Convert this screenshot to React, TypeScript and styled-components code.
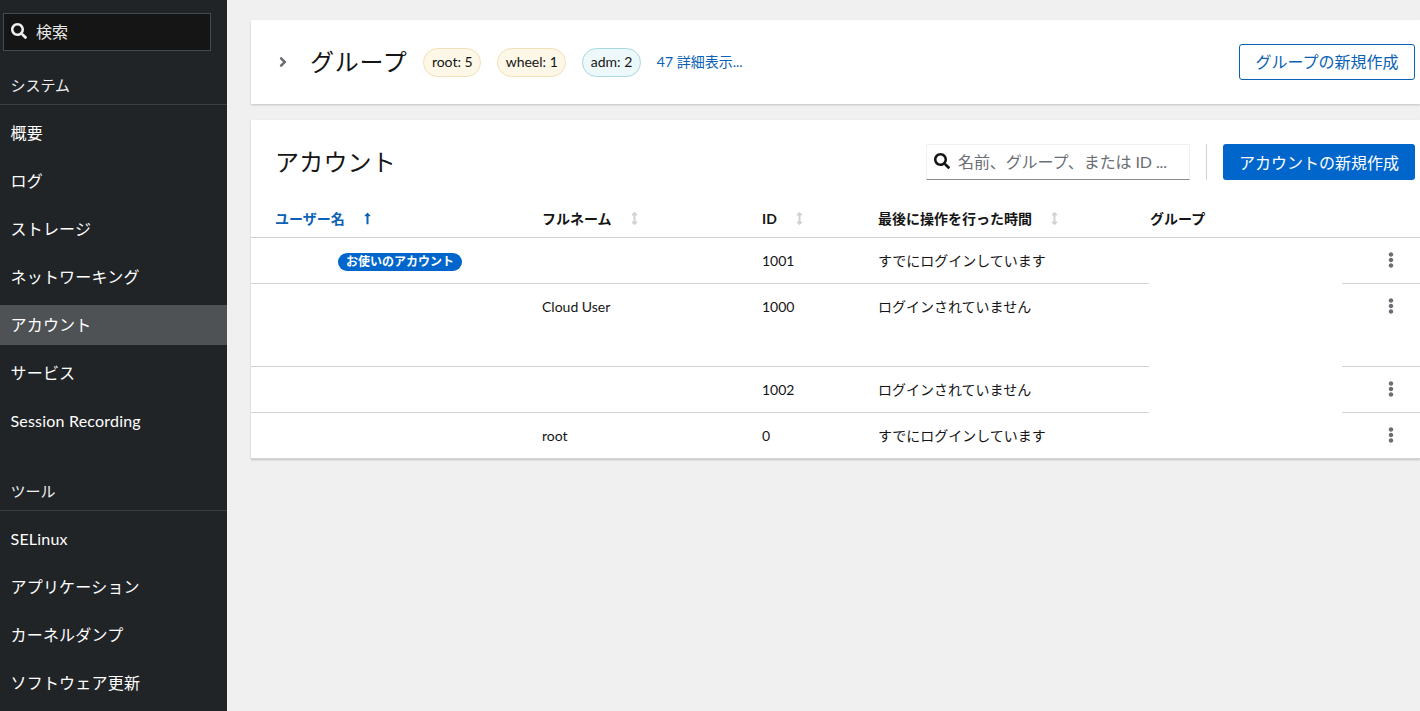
import styled, { createGlobalStyle } from "styled-components";
import { FaAngleRight, FaArrowsAltV, FaEllipsisV, FaLongArrowAltUp, FaSearch } from "react-icons/fa";

const FONT = `Lato, "Noto Sans CJK JP", sans-serif`;

const GlobalStyle = createGlobalStyle`
    html, body {
        margin: 0;
        height: 100%;
        overflow: hidden;
        background: #f0f0f0;
        font-family: ${FONT};
    }
    * {
        box-sizing: border-box;
    }
`;

const Page = styled.div`
    display: flex;
    width: 1420px;
    height: 711px;
    overflow: hidden;
`;

const Sidebar = styled.nav`
    flex: 0 0 227px;
    display: flex;
    flex-direction: column;
    background: #212427;
    color: #fff;
    padding-top: 13px;
`;

const SearchBox = styled.div`
    display: flex;
    align-items: center;
    gap: 9px;
    width: 208px;
    height: 38px;
    margin-left: 3px;
    padding: 0 0 2px 7px;
    background: #151515;
    border: 1px solid #454a4f;
    color: #e8e8e8;
    font-size: 16px;
    & svg {
        font-size: 16px;
        color: #f0f0f0;
    }
`;

const SectionTitle = styled.div<{ $top: number }>`
    height: 33px;
    margin-top: ${(p) => p.$top}px;
    padding: 0 10.5px;
    line-height: 27px;
    font-size: 15px;
    color: #f0f0f0;
    border-bottom: 1px solid #3c3f42;
`;

const NavList = styled.div`
    display: flex;
    flex-direction: column;
    gap: 8px;
    padding-top: 8px;
`;

const NavItem = styled.div<{ $active?: boolean }>`
    height: 40px;
    padding: 0 10.5px;
    line-height: 40px;
    font-size: 16px;
    letter-spacing: 0.2px;
    color: #fff;
    white-space: nowrap;
    background: ${(p) => (p.$active ? "#4f5255" : "transparent")};
`;

const Main = styled.main`
    flex: 1;
    min-width: 0;
    display: flex;
    flex-direction: column;
    gap: 16px;
    padding: 20px 0 0 24px;
`;

const Card = styled.section`
    background: #fff;
    box-shadow: 0 1px 2px rgba(3, 3, 3, 0.2);
`;

const GroupCard = styled(Card)`
    display: flex;
    align-items: center;
    height: 84px;
    padding: 0 5px 0 24px;
    color: #151515;
`;

const Chevron = styled.span`
    display: flex;
    width: 35px;
    color: #6a6e73;
    font-size: 16px;
`;

const GroupTitle = styled.h2`
    margin: 0 16px 4px 0;
    font-size: 24px;
    font-weight: 400;
    letter-spacing: 0.7px;
    color: #151515;
`;

const Chip = styled.span<{ $info?: boolean }>`
    height: 29px;
    margin: 0 16px 0 0;
    padding: 0 7.5px;
    line-height: 26px;
    font-size: 14px;
    color: #151515;
    border-radius: 15px;
    border: 1px solid ${(p) => (p.$info ? "#a9d8e0" : "#f3dfb5")};
    background: ${(p) => (p.$info ? "#edf8fa" : "#fdf7e7")};
`;

const MoreLink = styled.a`
    margin-bottom: 2px;
    font-size: 14px;
    color: #0b62b4;
`;

const OutlineButton = styled.button`
    margin-left: auto;
    height: 36px;
    padding: 0 15.5px 2px;
    font-family: inherit;
    font-size: 16px;
    color: #0b62b4;
    background: #fff;
    border: 1px solid #0b62b4;
    border-radius: 3px;
`;

const AccountCard = styled(Card)`
    padding-top: 24px;
`;

const Toolbar = styled.div`
    display: flex;
    align-items: center;
    height: 36px;
    padding: 0 5px 0 24px;
`;

const AccountTitle = styled.h2`
    margin: 0 auto 4px 0;
    font-size: 24px;
    font-weight: 400;
    letter-spacing: 0.2px;
    color: #151515;
`;

const FilterBox = styled.div`
    display: flex;
    align-items: center;
    gap: 8px;
    width: 264px;
    height: 36px;
    padding: 0 0 2px 7px;
    border: 1px solid #f0f0f0;
    border-bottom-color: #8a8d90;
    color: #6a6e73;
    font-size: 16px;
    letter-spacing: -0.1px;
    white-space: nowrap;
    & svg {
        font-size: 16px;
        color: #151515;
    }
`;

const Divider = styled.div`
    width: 1px;
    height: 36px;
    margin: 0 16px;
    background: #d2d2d2;
`;

const PrimaryButton = styled.button`
    height: 36px;
    padding: 0 16px;
    font-family: inherit;
    font-size: 16px;
    color: #fff;
    background: #06c;
    border: 0;
    border-radius: 3px;
`;

const Table = styled.table`
    width: 1169px;
    margin-top: 11px;
    table-layout: fixed;
    border-collapse: separate;
    border-spacing: 0;
    font-size: 14px;
    color: #151515;
`;

const HeadCell = styled.th<{ $active?: boolean; $flush?: boolean }>`
    height: 47px;
    padding: 8px 0 0 ${(p) => (p.$flush ? 1 : 24)}px;
    text-align: left;
    font-size: 14px;
    font-weight: 700;
    white-space: nowrap;
    color: ${(p) => (p.$active ? "#0b62b4" : "#151515")};
    border-bottom: 1px solid #d2d2d2;
    & svg {
        margin-left: 16px;
        vertical-align: -1px;
        font-size: 13px;
        color: ${(p) => (p.$active ? "#0b62b4" : "#d2d2d2")};
    }
`;

const Cell = styled.td<{ $plain?: boolean }>`
    padding: 15px 0 0 24px;
    vertical-align: top;
    line-height: 16px;
    border-bottom: ${(p) => (p.$plain ? "0" : "1px solid #d2d2d2")};
`;

const ActionCell = styled(Cell)`
    padding: 14px 0 0 41px;
    color: #6a6e73;
    font-size: 16px;
`;

const AccountBadge = styled.span`
    display: inline-block;
    height: 18px;
    margin-left: 63px;
    padding: 0 8px;
    line-height: 18px;
    font-size: 12px;
    font-weight: 700;
    color: #fff;
    background: #06c;
    border-radius: 9px;
    white-space: nowrap;
`;

const ROWS = [
    { badge: true, fullName: "", id: "1001", last: "すでにログインしています", height: 46 },
    { fullName: "Cloud User", id: "1000", last: "ログインされていません", height: 83 },
    { fullName: "", id: "1002", last: "ログインされていません", height: 46 },
    { fullName: "root", id: "0", last: "すでにログインしています", height: 46 },
];

const NAV_SYSTEM = ["概要", "ログ", "ストレージ", "ネットワーキング", "アカウント", "サービス", "Session Recording"];
const NAV_TOOLS = ["SELinux", "アプリケーション", "カーネルダンプ", "ソフトウェア更新"];

export default function App() {
    return (
        <Page>
            <GlobalStyle />
            <Sidebar>
                <SearchBox>
                    <FaSearch />
                    検索
                </SearchBox>
                <SectionTitle $top={21}>システム</SectionTitle>
                <NavList>
                    {NAV_SYSTEM.map((item) => (
                        <NavItem key={item} $active={item === "アカウント"}>
                            {item}
                        </NavItem>
                    ))}
                </NavList>
                <SectionTitle $top={37}>ツール</SectionTitle>
                <NavList>
                    {NAV_TOOLS.map((item) => (
                        <NavItem key={item}>{item}</NavItem>
                    ))}
                </NavList>
            </Sidebar>
            <Main>
                <GroupCard>
                    <Chevron>
                        <FaAngleRight />
                    </Chevron>
                    <GroupTitle>グループ</GroupTitle>
                    <Chip>root: 5</Chip>
                    <Chip>wheel: 1</Chip>
                    <Chip $info>adm: 2</Chip>
                    <MoreLink>47 詳細表示...</MoreLink>
                    <OutlineButton>グループの新規作成</OutlineButton>
                </GroupCard>
                <AccountCard>
                    <Toolbar>
                        <AccountTitle>アカウント</AccountTitle>
                        <FilterBox>
                            <FaSearch />
                            名前、グループ、または ID ...
                        </FilterBox>
                        <Divider />
                        <PrimaryButton>アカウントの新規作成</PrimaryButton>
                    </Toolbar>
                    <Table>
                        <colgroup>
                            <col width={267} />
                            <col width={220} />
                            <col width={116} />
                            <col width={295} />
                            <col width={193} />
                            <col width={78} />
                        </colgroup>
                        <thead>
                            <tr>
                                <HeadCell $active>
                                    ユーザー名
                                    <FaLongArrowAltUp />
                                </HeadCell>
                                <HeadCell>
                                    フルネーム
                                    <FaArrowsAltV />
                                </HeadCell>
                                <HeadCell>
                                    ID
                                    <FaArrowsAltV />
                                </HeadCell>
                                <HeadCell>
                                    最後に操作を行った時間
                                    <FaArrowsAltV />
                                </HeadCell>
                                <HeadCell $flush>グループ</HeadCell>
                                <HeadCell />
                            </tr>
                        </thead>
                        <tbody>
                            {ROWS.map((row, i) => (
                                <tr key={row.id} style={{ height: row.height }}>
                                    <Cell>{row.badge && <AccountBadge>お使いのアカウント</AccountBadge>}</Cell>
                                    <Cell>{row.fullName}</Cell>
                                    <Cell>{row.id}</Cell>
                                    <Cell>{row.last}</Cell>
                                    <Cell $plain={i < ROWS.length - 1} />
                                    <ActionCell>
                                        <FaEllipsisV />
                                    </ActionCell>
                                </tr>
                            ))}
                        </tbody>
                    </Table>
                </AccountCard>
            </Main>
        </Page>
    );
}
